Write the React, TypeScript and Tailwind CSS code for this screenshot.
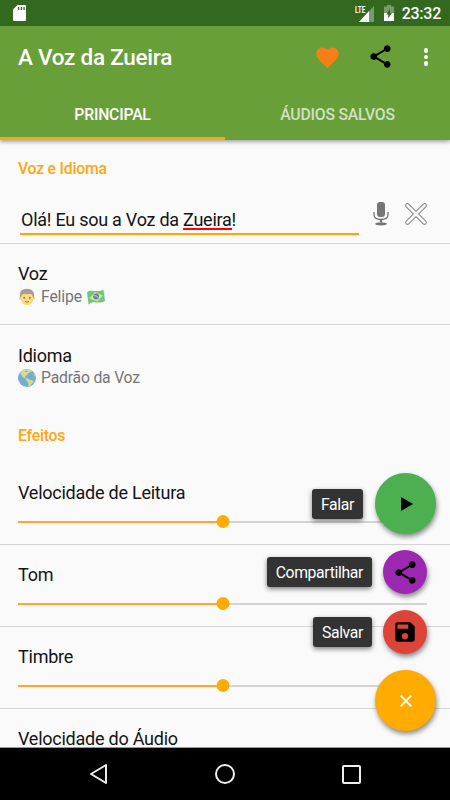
import type { ReactNode } from 'react';
import clsx from 'clsx';

const sliders = [
  { label: 'Velocidade de Leitura', value: 50 },
  { label: 'Tom', value: 50 },
  { label: 'Timbre', value: 50 },
];

function ShareIcon({ className }: { className?: string }) {
  return (
    <svg viewBox="0 0 24 24" className={className} fill="currentColor">
      <path d="M18 16.08c-.76 0-1.44.3-1.96.77L8.91 12.7c.05-.23.09-.46.09-.7s-.04-.47-.09-.7l7.05-4.11c.54.5 1.25.81 2.04.81 1.66 0 3-1.34 3-3s-1.34-3-3-3-3 1.34-3 3c0 .24.04.47.09.7L8.04 9.81C7.5 9.31 6.79 9 6 9c-1.66 0-3 1.34-3 3s1.34 3 3 3c.79 0 1.5-.31 2.04-.81l7.12 4.16c-.05.21-.08.43-.08.65 0 1.61 1.31 2.92 2.92 2.92s2.92-1.31 2.92-2.92-1.31-2.92-2.92-2.92z" />
    </svg>
  );
}

function StatusBar() {
  return (
    <div className="flex h-[26px] shrink-0 items-center bg-[#33691e] pr-[9px] pl-[13px] text-white">
      <svg viewBox="0 0 13 16" className="h-4 w-[13px]">
        <path d="M4.5 0H12a1 1 0 0 1 1 1v14a1 1 0 0 1-1 1H1a1 1 0 0 1-1-1V4.5z" fill="#fff" />
        <path d="M5 2h1.3v3H5zM7.8 2h1.3v3H7.8zM10.4 2h1.3v3h-1.3z" fill="#33691e" />
      </svg>
      <div className="ml-auto flex items-center">
        <svg viewBox="0 0 20 17" className="h-[17px] w-5">
          <path d="M19 1v16H4z" fill="#7a9c6c" />
          <path d="M14 6v11H4z" fill="#fff" />
          <path d="M0 0h11.5v8H0z" fill="#33691e" />
          <text x="0" y="8" textLength="10.500" lengthAdjust="spacingAndGlyphs" fontSize="9.500" fontWeight="700" fill="#fff">LTE</text>
        </svg>
        <svg viewBox="0 0 10 16" className="ml-[9px] h-4 w-2.5">
          <path d="M3 0h4v1.500h3V16H0V1.500h3z" fill="#7a9c6c" />
          <path d="M0 8h10v8H0z" fill="#fff" />
          <path d="M6 3.500 2.300 9.500h2V13.500L8 7.700H6z" fill="#33691e" />
        </svg>
        <span className="ml-[8px] pt-0.5 text-[16px] leading-none font-medium tracking-[-0.25px]">23:32</span>
      </div>
    </div>
  );
}

function AppBar() {
  return (
    <header className="relative z-10 h-[114px] shrink-0 bg-[#689f38] text-white shadow-[0_2px_4px_rgba(0,0,0,0.35)]">
      <div className="flex h-[62px] items-center pr-[22px] pl-[18px]">
        <h1 className="pt-px text-[22.5px] leading-none font-medium tracking-[-0.25px]">A Voz da Zueira</h1>
        <svg viewBox="0 0 24 24" className="ml-auto size-[27px] text-[#f57f17]" fill="currentColor">
          <path d="M12 21.35l-1.450-1.320C5.400 15.360 2 12.280 2 8.500 2 5.420 4.420 3 7.500 3c1.740 0 3.410.81 4.500 2.090C13.090 3.810 14.760 3 16.500 3 19.580 3 22 5.420 22 8.500c0 3.780-3.400 6.860-8.550 11.540L12 21.350z" />
        </svg>
        <ShareIcon className="-mt-0.5 ml-[26px] size-[27px] text-black" />
        <div className="ml-[30px] flex w-[4.500px] flex-col gap-[2px]">
          <i className="size-[4.500px] rounded-full bg-white" />
          <i className="size-[4.500px] rounded-full bg-white" />
          <i className="size-[4.500px] rounded-full bg-white" />
        </div>
      </div>
      <nav className="grid h-[52px] grid-cols-2 text-center text-[15.75px] font-medium tracking-[-0.2px]">
        <button className="border-b-[3px] border-[#ffa600] pt-[5px]">PRINCIPAL</button>
        <button className="pt-[2px] text-white/70">ÁUDIOS SALVOS</button>
      </nav>
    </header>
  );
}

function FaceEmoji() {
  return (
    <svg viewBox="0 0 18 18" className="size-[18px]">
      <circle cx="2.500" cy="10" r="1.500" fill="#f0ca70" />
      <circle cx="15.500" cy="10" r="1.500" fill="#f0ca70" />
      <path d="M3 6h12v5.500c0 3.500-2.500 5.500-6 5.500s-6-2-6-5.500z" fill="#fbdb80" />
      <path d="M2 9C1.300 3.500 4 .8 9 .8s7.700 2.700 7 8.200h-1.200c-.2-2-1-3-2.300-3h-7c-1.300 0-2.100 1-2.300 3z" fill="#ad9a95" />
      <circle cx="6.200" cy="9.800" r=".9" fill="#6f665c" />
      <circle cx="11.800" cy="9.800" r=".9" fill="#6f665c" />
      <path d="M7 13.500q2 1.300 4 0" stroke="#99734d" strokeWidth="1" fill="none" />
    </svg>
  );
}

function FlagEmoji() {
  return (
    <svg viewBox="0 0 18 16" className="h-4 w-[18px]">
      <path d="M0 3.200C4-.5 9 4 16.500.8L18 12C11 16 7 10.500 1.500 15.500z" fill="#68c983" />
      <path d="M2.500 9.500 8 3l7.700 3.600L10.300 12.500z" fill="#f4e276" />
      <circle cx="9.100" cy="7.600" r="3" fill="#6581ad" />
      <path d="M6.500 6.500q3 0 5.200 2.300" stroke="#dbe2e6" strokeWidth=".8" fill="none" />
    </svg>
  );
}

function GlobeEmoji() {
  return (
    <svg viewBox="0 0 18 18" className="size-[18px]">
      <circle cx="9" cy="9" r="9" fill="#73aed1" />
      <path d="M3 2.500C5 .8 8 0 11 .4L14.500 2l-2 1.300-1.700.2-1 2L7.500 7l-.4 1.500 3 1.200L12.500 11l2.500.5.500 1.500-2 2-1.500 2-1.500.8-.3-4.300-2-2-.6-2.200L5 8.500 2.500 5z" fill="#d0dc96" />
      <path d="m15.500 4 1.300 1.200.9 2.300-1.700-1z" fill="#d0dc96" />
      <path d="m7 2 2-.6.8 1L8 3z" fill="#73aed1" />
    </svg>
  );
}

function SectionTitle({ children }: { children: ReactNode }) {
  return <h2 className="text-[15.75px] leading-5 font-medium tracking-[-0.22px] text-[#ffa613]">{children}</h2>;
}

function RowTitle({ children }: { children: ReactNode }) {
  return <div className="text-[18px] leading-[22px] tracking-[-0.24px] text-[#141414]">{children}</div>;
}

function SliderRow({ label, value }: { label: string; value: number }) {
  return (
    <div className="h-[82px] shrink-0 border-b border-[#d4d4d4] px-[18px] pt-[19px]">
      <RowTitle>{label}</RowTitle>
      <div className="relative mt-[15px] h-[5px] w-[409px] py-[1.500px]">
        <div className="h-0.5 bg-[#d4d4d4]">
          <div className="h-full bg-[#ffa632]" style={{ width: `${value}%` }} />
        </div>
        <span
          className="absolute top-[-4px] size-[13px] -translate-x-1/2 rounded-full bg-[#ffab00]"
          style={{ left: `${value}%` }}
        />
      </div>
    </div>
  );
}

function FabRow({ label, color, large, children }: { label?: string; color: string; large?: boolean; children: ReactNode }) {
  return (
    <div className={clsx('flex items-center justify-end', large ? 'gap-3' : 'gap-[11px] pr-[9px]')}>
      {label && (
        <span className="flex h-[30px] items-center rounded-[3px] bg-[#333] px-[9px] pt-0.5 text-[15.75px] leading-none tracking-[-0.35px] text-white shadow-[0_2px_5px_rgba(0,0,0,0.5)]">
          {label}
        </span>
      )}
      <button
        className={clsx(
          'flex items-center justify-center rounded-full shadow-[1px_3px_5px_rgba(0,0,0,0.45)]',
          large ? 'size-[61px]' : 'size-11',
          color
        )}
      >
        {children}
      </button>
    </div>
  );
}

export default function App() {
  return (
    <div className="relative flex h-[800px] w-[450px] flex-col overflow-hidden bg-[#fafafa] font-[Roboto,sans-serif]">
      <StatusBar />
      <AppBar />

      <main className="flex min-h-0 flex-1 flex-col overflow-hidden">
        {/* Voice and language */}
        <section className="h-[104px] shrink-0 border-b border-[#d4d4d4] px-[18px] pt-[19px]">
          <SectionTitle>Voz e Idioma</SectionTitle>
          <div className="mt-5 flex">
            <div className="ml-0.5 h-9 w-[339px] border-b-2 border-[#ffa600] pt-[10px] pl-px text-[18px] leading-[22px] tracking-[-0.25px] text-[#141414]">
              Olá! Eu sou a Voz da <span className="inline-block h-[21px] border-b-2 border-[#f00]">Zueira</span>!
            </div>
            <svg viewBox="0 0 16 25" className="mt-[2px] ml-[14px] h-[25px] w-4">
              <rect x="4" y="1" width="8" height="15" rx="3" fill="#757575" />
              <path d="M1 11v2.500c0 3 2.800 5 7 5s7-2 7-5V11" stroke="#757575" strokeWidth="1.300" fill="none" />
              <path d="M6.800 18h2.400v3H6.800z" fill="#757575" />
              <ellipse cx="8" cy="22.800" rx="6" ry="1.600" fill="#757575" />
            </svg>
            <svg viewBox="0 0 24 24" className="mt-[3px] ml-[15px] size-6">
              <path d="m3.500 3.500 17 17m0-17-17 17" stroke="#858585" strokeWidth="4.600" strokeLinecap="round" />
              <path d="m3.500 3.500 17 17m0-17-17 17" stroke="#fafafa" strokeWidth="2.600" strokeLinecap="round" />
            </svg>
          </div>
        </section>
        <section className="h-[81px] shrink-0 border-b border-[#d4d4d4] px-[18px] pt-[19px]">
          <RowTitle>Voz</RowTitle>
          <div className="mt-[2px] flex items-center text-[15.75px] leading-[19px] tracking-[-0.15px] text-[#757575]">
            <FaceEmoji />
            <span className="mr-[5px] ml-[5px]">Felipe</span>
            <FlagEmoji />
          </div>
        </section>
        <section className="h-[82px] shrink-0 px-[18px] pt-5">
          <RowTitle>Idioma</RowTitle>
          <div className="mt-px flex items-center text-[15.75px] leading-[19px] tracking-[-0.2px] text-[#757575]">
            <GlobeEmoji />
            <span className="ml-[5px]">Padrão da Voz</span>
          </div>
        </section>

        {/* Effects */}
        <div className="h-[56px] shrink-0 px-[18px] pt-[19px]">
          <SectionTitle>Efeitos</SectionTitle>
        </div>
        {sliders.map((slider) => (
          <SliderRow key={slider.label} {...slider} />
        ))}
        <div className="px-[18px] pt-[19px]">
          <RowTitle>Velocidade do Áudio</RowTitle>
        </div>
      </main>

      {/* Floating actions */}
      <div className="absolute top-[473px] right-[14px] z-20 flex flex-col gap-4">
        <FabRow label="Falar" color="bg-[#4caf50]" large>
          <svg viewBox="0 0 12 14" className="ml-[3px] h-3.5 w-3">
            <path d="M0 0v14l12-7z" />
          </svg>
        </FabRow>
        <FabRow label="Compartilhar" color="bg-[#9c27b0]">
          <ShareIcon className="size-[27px]" />
        </FabRow>
        <FabRow label="Salvar" color="bg-[#db4437]">
          <svg viewBox="0 0 24 24" className="size-[26px]" fill="currentColor">
            <path d="M17 3H5c-1.110 0-2 .9-2 2v14c0 1.100.89 2 2 2h14c1.100 0 2-.9 2-2V7l-4-4zm-5 16c-1.660 0-3-1.340-3-3s1.340-3 3-3 3 1.340 3 3-1.340 3-3 3zm3-10H5V5h10v4z" />
          </svg>
        </FabRow>
        <FabRow color="bg-[#ffab00]" large>
          <svg viewBox="0 0 12 12" className="size-3">
            <path d="m.7.7 10.600 10.600m0-10.600L.7 11.300" stroke="#fff" strokeWidth="1.900" />
          </svg>
        </FabRow>
      </div>

      {/* System navigation */}
      <footer className="z-10 flex h-[53px] shrink-0 items-center border-t border-[#999] bg-black pl-[89px]">
        <svg viewBox="0 0 20 22" className="h-[22px] w-5">
          <path d="M17 2v18L2 11z" stroke="#eee" strokeWidth="2" strokeLinejoin="round" fill="none" />
        </svg>
        <span className="ml-[106px] size-5 rounded-full border-2 border-[#eee]" />
        <span className="ml-[107px] h-[19px] w-[19px] rounded-[2px] border-2 border-[#eee]" />
      </footer>
    </div>
  );
}
